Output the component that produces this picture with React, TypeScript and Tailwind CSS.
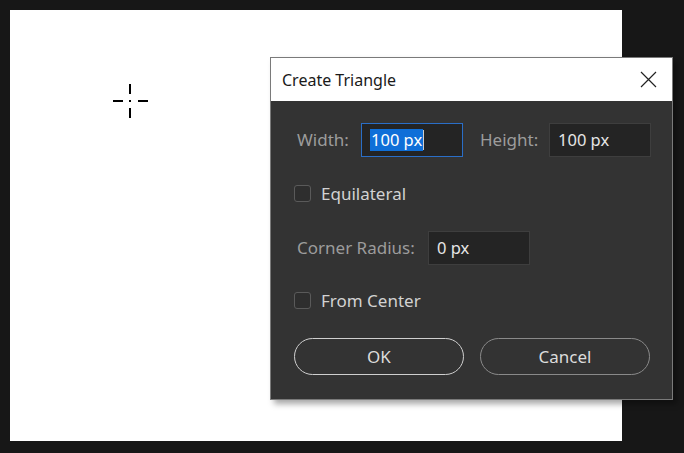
import type { ReactNode } from 'react';

const font = { fontFamily: '"Noto Sans", "Open Sans", sans-serif' };

function Field({ value, focused, width }: { value: string; focused?: boolean; width: string }) {
  return (
    <div
      className={`${width} h-[34px] flex items-center pl-[8px] text-[16.5px] text-[#e6e6e6] bg-[#242424] border ${
        focused ? 'border-[#2a6ec7]' : 'border-[#3e3e3e]'
      }`}
    >
      {focused ? (
        <span className="flex items-center">
          <span className="bg-[#0f6fd8] text-white leading-[22px] px-px">{value}</span>
          <span className="w-px h-[20px] bg-[#d0d0d0]" />
        </span>
      ) : (
        <span className="leading-[22px]">{value}</span>
      )}
    </div>
  );
}

function Check({ children }: { children: ReactNode }) {
  return (
    <div className="flex items-center h-[17px] gap-[10px]">
      <div className="w-[17px] h-[17px] rounded-[3px] border border-[#5a5a5a] bg-[#2e2e2e]" />
      <span className="text-[17px] text-[#d2d2d2] leading-none">{children}</span>
    </div>
  );
}

function Crosshair() {
  return (
    <svg className="absolute left-[113px] top-[84px]" width="35" height="35" viewBox="0 0 35 35">
      <g fill="#000">
        <rect x="16" y="0" width="2" height="10" />
        <rect x="16" y="24" width="2" height="10" />
        <rect x="0" y="16" width="10" height="2" />
        <rect x="25" y="16" width="10" height="2" />
        <rect x="16" y="16" width="2" height="2" />
      </g>
    </svg>
  );
}

export default function App() {
  return (
    <div className="relative w-[684px] h-[453px] bg-[#171717] overflow-hidden" style={font}>
      <div className="pt-[10px] pl-[10px]">
        <div className="w-[612px] h-[431px] bg-white" />
      </div>
      <Crosshair />

      <div className="absolute left-[270px] top-[57px] w-[403px] h-[343px] border border-[#7a7a7a] bg-[#333333] shadow-[4px_4px_6px_rgba(0,0,0,0.35)] flex flex-col">
        <div className="h-[43px] bg-white flex items-center justify-between pl-[11px] pr-[15px]">
          <span className="text-[16px] text-[#1a1a1a]">Create Triangle</span>
          <svg width="17" height="17" viewBox="0 0 17 17">
            <path d="M1 1 L16 16 M16 1 L1 16" stroke="#222" strokeWidth="1.2" fill="none" />
          </svg>
        </div>

        <div className="flex flex-col pl-[23px] pt-[22px]">
          <div className="flex items-center">
            <span className="ml-[3px] w-[64px] text-[17px] text-[#9c9c9c]">Width:</span>
            <Field value="100 px" focused width="w-[102px]" />
            <span className="ml-[17px] w-[69px] text-[17px] text-[#9c9c9c]">Height:</span>
            <Field value="100 px" width="w-[102px]" />
          </div>

          <div className="mt-[28px]">
            <Check>Equilateral</Check>
          </div>

          <div className="flex items-center mt-[29px]">
            <span className="ml-[3px] w-[131px] text-[17px] text-[#9c9c9c]">Corner Radius:</span>
            <Field value="0 px" width="w-[102px]" />
          </div>

          <div className="mt-[27px]">
            <Check>From Center</Check>
          </div>

          <div className="flex mt-[29px] gap-[16px]">
            <button className="w-[170px] h-[37px] rounded-full border border-[#cfcfcf] text-[17px] text-[#dcdcdc]">
              OK
            </button>
            <button className="w-[170px] h-[37px] rounded-full border border-[#8a8a8a] text-[17px] text-[#dcdcdc]">
              Cancel
            </button>
          </div>
        </div>
      </div>
    </div>
  );
}
